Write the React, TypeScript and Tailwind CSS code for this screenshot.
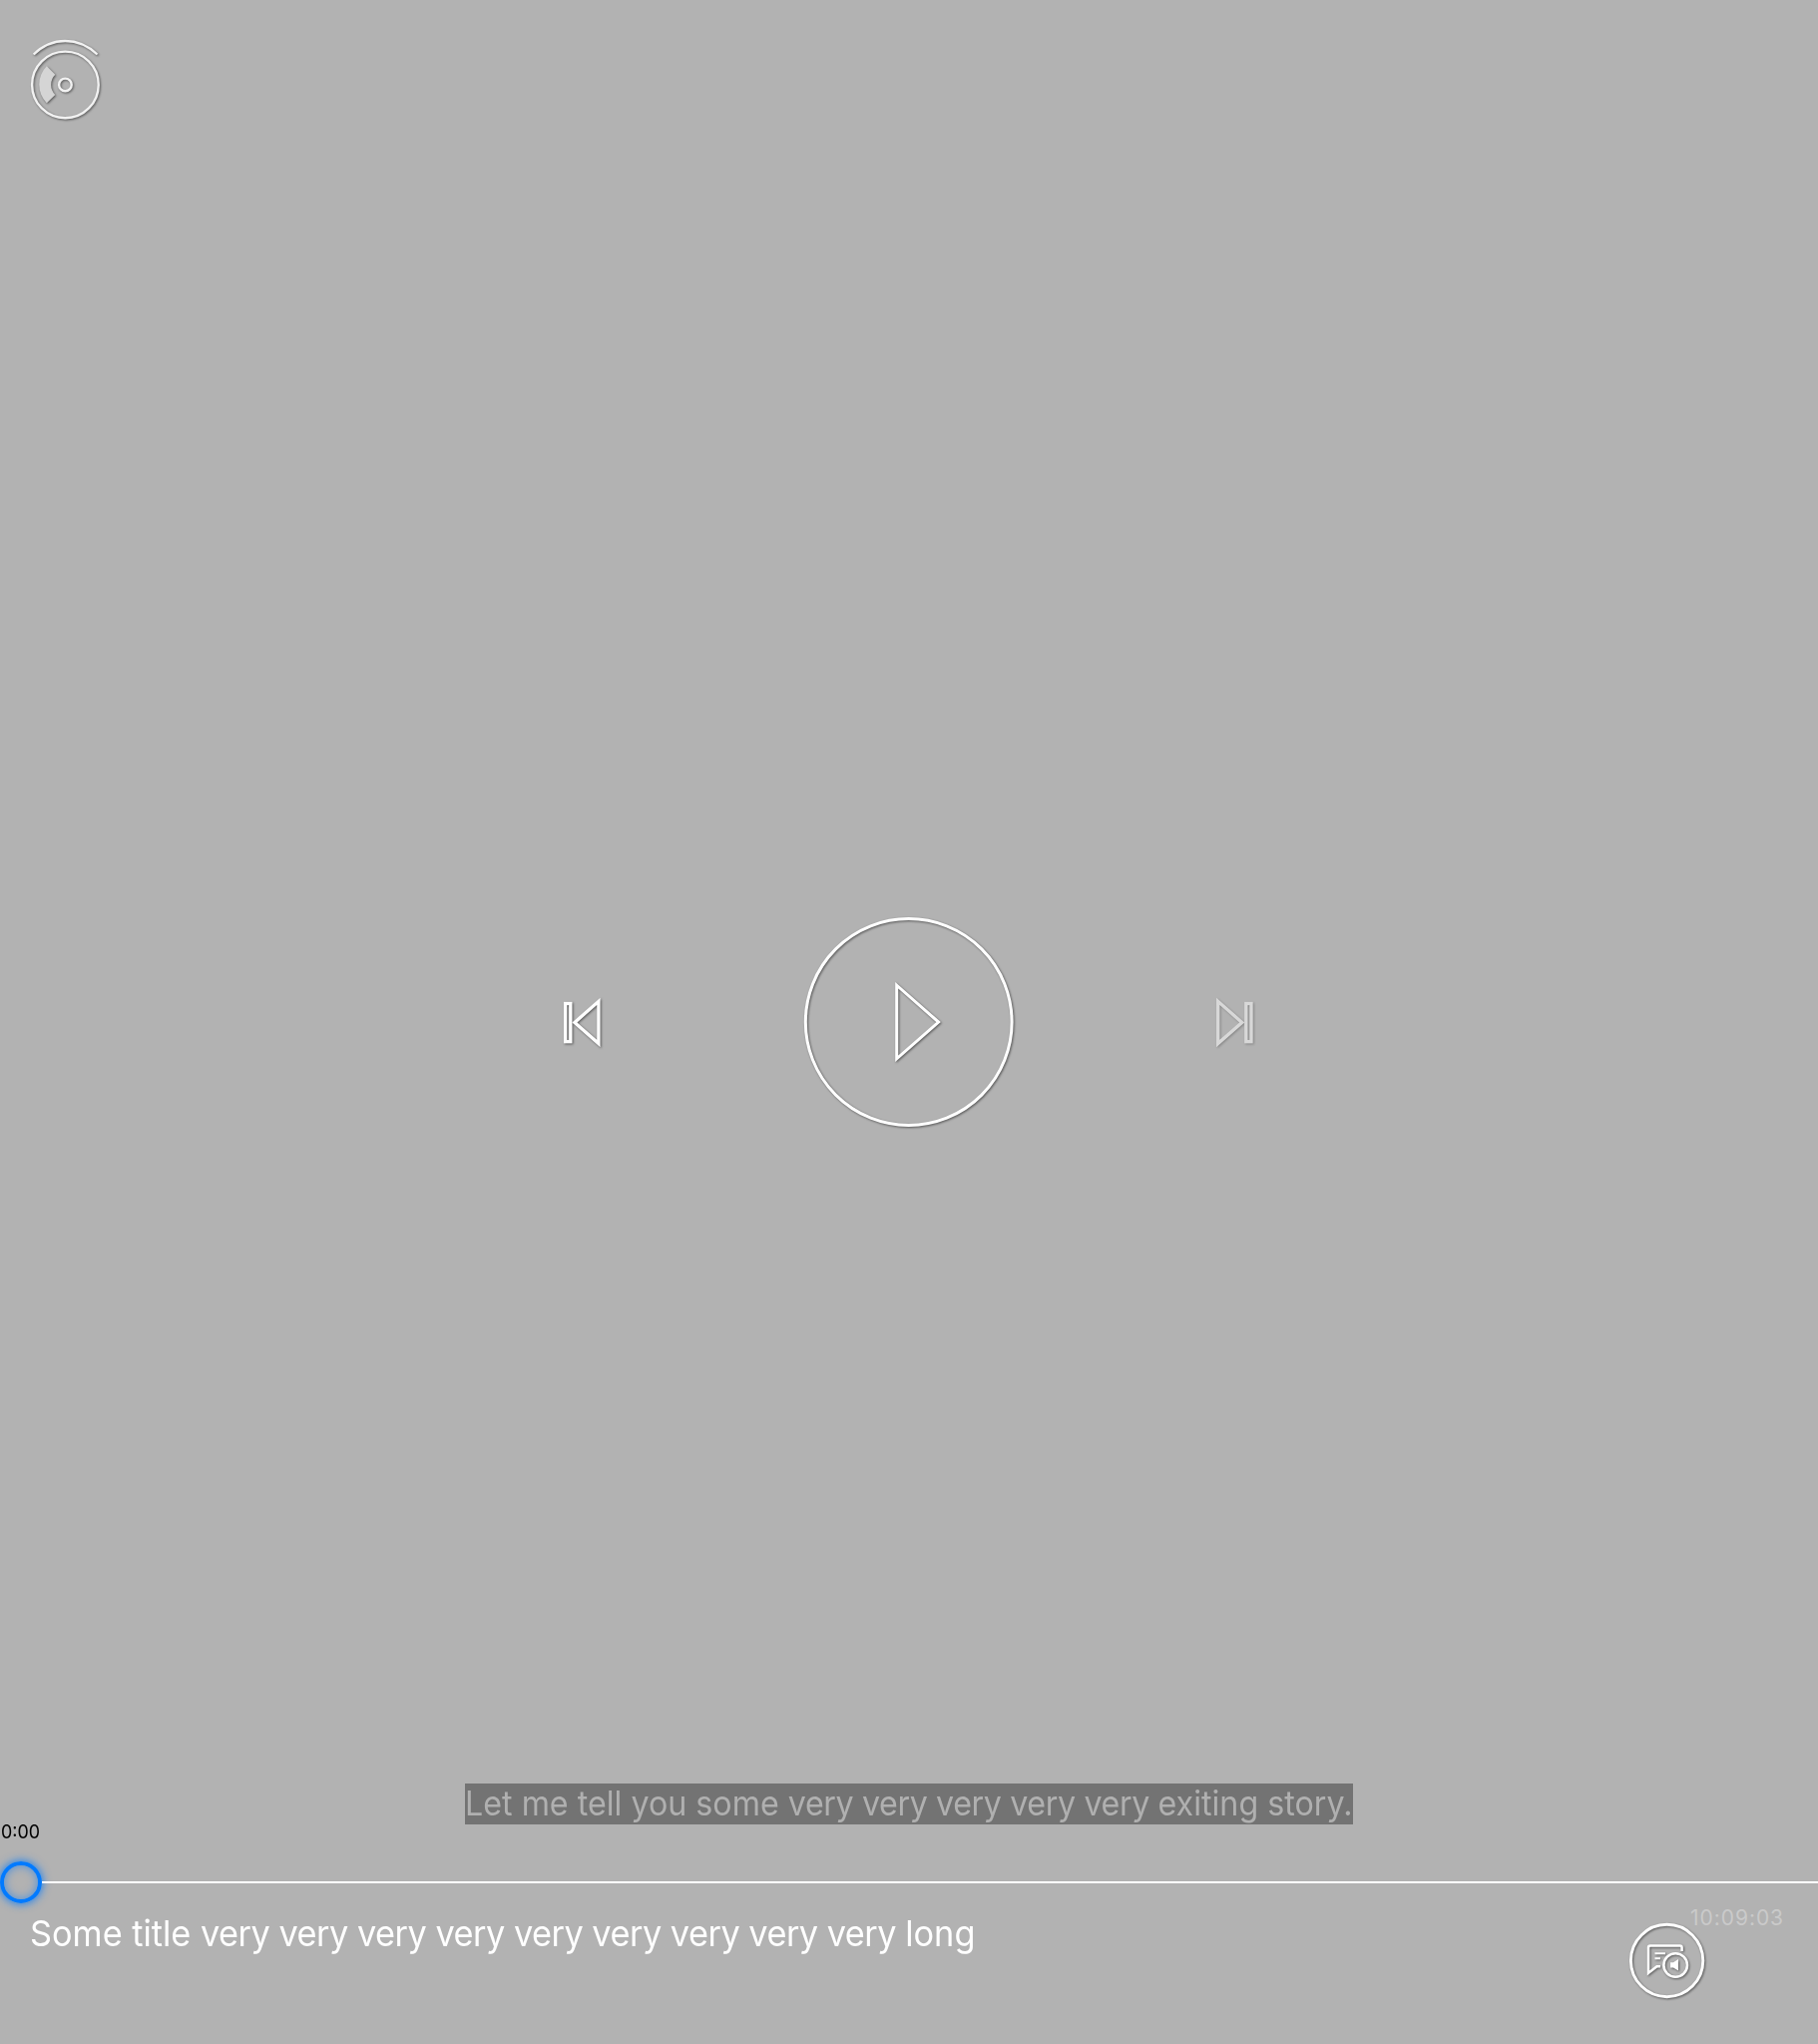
import React from "react";

const shadow = "overflow-visible [filter:drop-shadow(1.2px_1.2px_0.8px_rgba(0,0,0,0.5))]";

function BrandMark() {
  return (
    <svg width="72" height="82" viewBox="30 39 72 82" fill="none" stroke="#f2f2f2" strokeWidth="2.4" className={shadow}>
      <path d="M33.7 54.5C41.7 46.7 52.7 41 65.4 41C77.7 41 89.2 46.7 97.5 54.5" />
      <circle cx="65.4" cy="84.9" r="33.3" />
      <circle cx="65.4" cy="84.9" r="6.3" />
      <path d="M46.8 66.3L55.3 74.8A14.3 14.3 0 0 0 55.3 95L46.8 103.2A26.3 26.3 0 0 1 46.8 66.3Z" fill="#d5d5d5" stroke="none" />
    </svg>
  );
}

function PreviousIcon() {
  return (
    <svg width="40" height="52" viewBox="563 998 40 52" fill="none" stroke="#fff" strokeWidth="3.3" className={shadow}>
      <rect x="566.6" y="1005.5" width="5.2" height="38.2" />
      <path d="M599.9 1003.3V1045.5L575.9 1024.4Z" />
    </svg>
  );
}

function NextIcon() {
  return (
    <svg width="40" height="52" viewBox="1218 998 40 52" fill="none" stroke="#fff" strokeWidth="3.3" className={shadow}>
      <path d="M1220.7 1003.3V1045.5L1244.7 1024.4Z" />
      <rect x="1248.8" y="1005.5" width="5.2" height="38.2" />
    </svg>
  );
}

function PlayIcon() {
  return (
    <svg width="212" height="212" viewBox="805 918 212 212" fill="none" stroke="#fff" strokeWidth="3" className={shadow}>
      <circle cx="910.7" cy="1024" r="103.4" />
      <path d="M898.7 987.2V1060.8L940.6 1024.1Z" />
    </svg>
  );
}

function CaptionsIcon() {
  return (
    <svg width="76" height="76" viewBox="1633 1927 76 76" fill="none" stroke="#fff" strokeWidth="2.5" className={shadow}>
      <circle cx="1670.6" cy="1964.5" r="36.2" strokeWidth="2.9" />
      <path d="M1685.6 1955V1951.5Q1685.6 1949.5 1683.6 1949.5H1654Q1652 1949.5 1652 1951.5V1977L1660.5 1970.3H1664" />
      <path d="M1658.5 1957.3H1669M1658.5 1962.3H1664" strokeWidth="2.1" />
      <circle cx="1679.2" cy="1969" r="11.8" />
      <path d="M1674.1 1966.3H1677L1682 1963V1974.6L1677 1971.4H1674.1Z" fill="#fff" stroke="none" />
    </svg>
  );
}

export default function App() {
  return (
    <main className="flex h-[2048px] w-[1822px] flex-col overflow-hidden bg-[#b2b2b2] font-['Inter',sans-serif]">
      <header className="h-[918px] shrink-0 pl-[30px] pt-[39px]">
        <BrandMark />
      </header>
      <section className="flex h-[212px] shrink-0 items-center">
        <button aria-label="Previous" className="ml-[563px]"><PreviousIcon /></button>
        <button aria-label="Play" className="ml-[202px]"><PlayIcon /></button>
        <button aria-label="Next" disabled className="ml-[201px] opacity-50"><NextIcon /></button>
      </section>
      <div className="mt-[657px] flex h-[41px] shrink-0 justify-center">
        <p className="h-[41px] w-[890px] whitespace-nowrap bg-[#737373] text-[34px] leading-[40px] text-[#b0b0b0]">
          <span className="inline-block origin-left scale-x-[0.948]">
            Let me tell you some <span className="tracking-[-0.41px]">very very very very very </span>exiting story.
          </span>
        </p>
      </div>
      <div className="h-[37px] shrink-0 pl-px text-[19px] leading-[16px] text-black">
        <span className="inline-block origin-left scale-x-[0.94]">0:00</span>
      </div>
      <div className="flex h-[42px] shrink-0 items-center">
        <div className="-ml-[0.5px] size-[42px] shrink-0 rounded-full border-4 border-[#007aff] shadow-[0_0_10px_#007aff,inset_0_0_10px_rgba(0,122,255,0.6)]" />
        <div className="h-[2px] grow bg-white" />
      </div>
      <footer className="flex grow items-start">
        <h1 className="ml-[30px] mt-[8px] w-[960px] whitespace-nowrap text-[36px] leading-[44px] text-white">
          <span className="inline-block origin-left scale-x-[0.953]">
            Some title <span className="tracking-[-0.53px]">very very very very very very very very very </span>long
          </span>
        </h1>
        <div className="ml-auto flex">
          <button aria-label="Captions and audio" className="mt-[20px]"><CaptionsIcon /></button>
          <time className="-ml-[15px] mr-[34px] mt-[3px] whitespace-nowrap text-[21px] leading-[24px] tracking-[0.95px] text-[#cacaca]">10:09:03</time>
        </div>
      </footer>
    </main>
  );
}
